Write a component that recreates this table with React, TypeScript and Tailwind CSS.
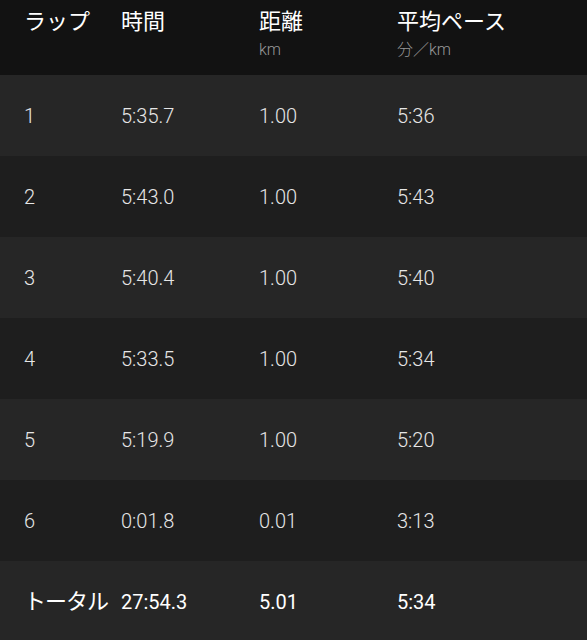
import React from 'react'

const laps = [
  { lap: '1', time: '5:35.7', dist: '1.00', pace: '5:36' },
  { lap: '2', time: '5:43.0', dist: '1.00', pace: '5:43' },
  { lap: '3', time: '5:40.4', dist: '1.00', pace: '5:40' },
  { lap: '4', time: '5:33.5', dist: '1.00', pace: '5:34' },
  { lap: '5', time: '5:19.9', dist: '1.00', pace: '5:20' },
  { lap: '6', time: '0:01.8', dist: '0.01', pace: '3:13' },
]

const font = "font-['Roboto','Noto_Sans_CJK_JP',sans-serif]"

export default function App() {
  return (
    <div className={`w-[587px] h-[640px] overflow-hidden bg-[#121212] ${font}`}>
      {/* ヘッダー */}
      <div className="grid grid-cols-[97px_138px_138px_1fr] h-[75px] pl-6 pt-[7px] text-white">
        <div className="text-[22px] leading-[30px]">ラップ</div>
        <div className="text-[22px] leading-[30px]">時間</div>
        <div>
          <div className="text-[22px] leading-[30px]">距離</div>
          <div className="mt-[3px] text-[16px] font-light text-[#979797] leading-[20px]">km</div>
        </div>
        <div>
          <div className="text-[22px] leading-[30px]">平均ペース</div>
          <div className="mt-[3px] text-[16px] font-light text-[#979797] leading-[20px]">分／km</div>
        </div>
      </div>

      {laps.map((l, i) => (
        <div
          key={l.lap}
          className={`grid grid-cols-[97px_138px_138px_1fr] items-center h-[81px] pl-6 text-[20px] font-light text-[#e6e6e6] ${
            i % 2 === 0 ? 'bg-[#262626]' : 'bg-[#1e1e1e]'
          }`}
        >
          <div>{l.lap}</div>
          <div>{l.time}</div>
          <div>{l.dist}</div>
          <div>{l.pace}</div>
        </div>
      ))}

      {/* トータル */}
      <div className="grid grid-cols-[97px_138px_138px_1fr] items-center h-[81px] pl-6 text-[20px] text-white bg-[#262626]">
        <div className="text-[22px] tracking-[-1px]">トータル</div>
        <div>27:54.3</div>
        <div>5.01</div>
        <div>5:34</div>
      </div>
    </div>
  )
}
